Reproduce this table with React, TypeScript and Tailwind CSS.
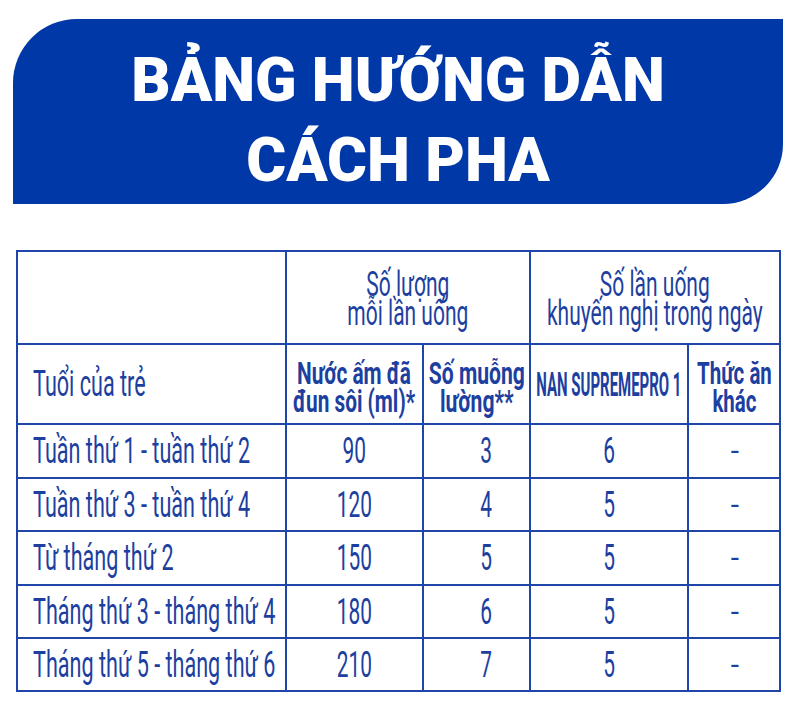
import { Fragment } from "react";
import type { ReactNode } from "react";

const rows = [
  ["Tuần thứ 1 - tuần thứ 2", "90", "3", "6", "-"],
  ["Tuần thứ 3 - tuần thứ 4", "120", "4", "5", "-"],
  ["Từ tháng thứ 2", "150", "5", "5", "-"],
  ["Tháng thứ 3 - tháng thứ 4", "180", "6", "5", "-"],
  ["Tháng thứ 5 - tháng thứ 6", "210", "7", "5", "-"],
];

const cell = "border-r-2 border-b-2 border-[#1f45a8] flex items-center";

// squeezes text sideways, the reference uses a condensed face we don't have
const Sq = ({ children, className }: { children: ReactNode; className: string }) => (
  <span className={`inline-block whitespace-nowrap ${className}`}>{children}</span>
);

export default function App() {
  return (
    <div className="w-[800px] h-[720px] bg-white overflow-hidden font-['Roboto',sans-serif] text-[#1d3f9f]">
      <div className="ml-[13px] mt-[19px] w-[770px] h-[185px] bg-[#0038a8] rounded-tl-[64px] rounded-br-[60px] pt-[21px] text-center text-white font-black text-[61px] leading-[80px]">
        <div>BẢNG HƯỚNG DẪN</div>
        <div>CÁCH PHA</div>
      </div>

      <div className="ml-[16px] mt-[46px] w-fit grid grid-cols-[269px_137px_107px_158px_92px] grid-rows-[93px_80px_54px_53px_54px_53px_53px] border-l-2 border-t-2 border-[#1f45a8]">
        <div className={cell} />
        <div className={`${cell} col-span-2 justify-center pt-[2px]`}>
          <Sq className="scale-x-[0.6] text-center text-[35px] leading-[29px]">
            Số lượng
            <br />
            mỗi lần uống
          </Sq>
        </div>
        <div className={`${cell} col-span-2 justify-center pt-[2px]`}>
          <Sq className="scale-x-[0.6] text-center text-[35px] leading-[29px]">
            Số lần uống
            <br />
            khuyến nghị trong ngày
          </Sq>
        </div>

        <div className={`${cell} pl-[15px]`}>
          <Sq className="origin-left scale-x-[0.6] text-[36px] leading-[30px]">Tuổi của trẻ</Sq>
        </div>
        <div className={`${cell} justify-center pt-[6px]`}>
          <Sq className="scale-x-[0.65] text-center font-bold text-[32px] leading-[28px]">
            Nước ấm đã
            <br />
            đun sôi (ml)*
          </Sq>
        </div>
        <div className={`${cell} justify-center pt-[6px]`}>
          <Sq className="scale-x-[0.66] text-center font-bold text-[32px] leading-[28px]">
            Số muỗng
            <br />
            lường**
          </Sq>
        </div>
        <div className={`${cell} justify-center`}>
          <Sq className="scale-x-[0.44] font-bold text-[34px] leading-[28px]">NAN SUPREMEPRO 1</Sq>
        </div>
        <div className={`${cell} justify-center pt-[6px]`}>
          <Sq className="scale-x-[0.64] text-center font-bold text-[32px] leading-[28px]">
            Thức ăn
            <br />
            khác
          </Sq>
        </div>

        {rows.map((r) => (
          <Fragment key={r[0]}>
            <div className={`${cell} pl-[15px]`}>
              <Sq className="origin-left scale-x-[0.6] text-[36px] leading-[30px]">{r[0]}</Sq>
            </div>
            <div className={`${cell} justify-center`}>
              <Sq className="scale-x-[0.58] text-[36px] leading-[30px]">{r[1]}</Sq>
            </div>
            <div className={`${cell} justify-center pl-[20px]`}>
              <Sq className="scale-x-[0.58] text-[36px] leading-[30px]">{r[2]}</Sq>
            </div>
            <div className={`${cell} justify-center`}>
              <Sq className="scale-x-[0.58] text-[36px] leading-[30px]">{r[3]}</Sq>
            </div>
            <div className={`${cell} justify-center pl-[2px]`}>
              <Sq className="text-[30px] leading-[30px]">{r[4]}</Sq>
            </div>
          </Fragment>
        ))}
      </div>
    </div>
  );
}
